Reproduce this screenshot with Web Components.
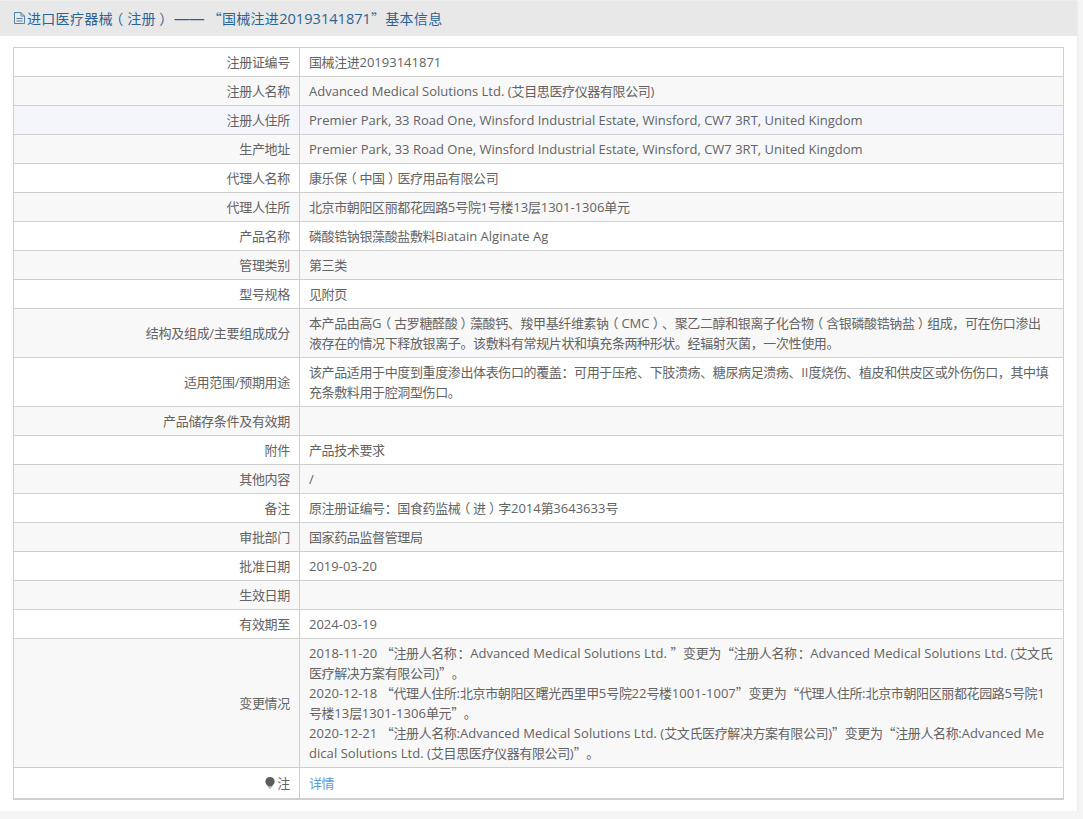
<!DOCTYPE html>
<html lang="zh">
<head>
<meta charset="utf-8">
<title>进口医疗器械（注册）</title>
<style>
  html, body { margin: 0; padding: 0; background: #f5f5f5; }
  body { font-family: "Open Sans", "Noto Sans CJK SC", sans-serif; font-size: 13px; color: #636363; overflow: hidden; text-spacing-trim: space-all; }
  /* runs made by markRuns() */
  .en { letter-spacing: 0; }
  .fw { font-feature-settings: "halt"; padding: 0 .25em; }
  .q { font-family: "Noto Sans CJK SC", sans-serif; }
  .co { font-family: "Noto Sans CJK TC", sans-serif; }
  .title { font-size: 14px; letter-spacing: .3px; }
  .title .en { font-size: 14.6px; }
  .dash { font-size: 16px; letter-spacing: -1px; padding: 0 4px 0 3.6px; }
  detail-row[wide] .en { letter-spacing: .05px; }
  detail-row[wide] .co { padding-left: 1px; }
</style>
</head>
<body>
<detail-panel>
  <span slot="title" class="title">进口医疗器械（注册）<span class="dash">——</span>“国械注进20193141871”基本信息</span>
  <detail-row first label="注册证编号">国械注进20193141871</detail-row>
  <detail-row label="注册人名称" alt>Advanced Medical Solutions Ltd. (艾目思医疗仪器有限公司)</detail-row>
  <detail-row label="注册人住所" hover>Premier Park, 33 Road One, Winsford Industrial Estate, Winsford, CW7 3RT, United Kingdom</detail-row>
  <detail-row label="生产地址" alt>Premier Park, 33 Road One, Winsford Industrial Estate, Winsford, CW7 3RT, United Kingdom</detail-row>
  <detail-row label="代理人名称">康乐保（中国）医疗用品有限公司</detail-row>
  <detail-row label="代理人住所" alt>北京市朝阳区丽都花园路5号院1号楼13层1301-1306单元</detail-row>
  <detail-row label="产品名称">磷酸锆钠银藻酸盐敷料Biatain Alginate Ag</detail-row>
  <detail-row label="管理类别" alt>第三类</detail-row>
  <detail-row label="型号规格">见附页</detail-row>
  <detail-row label="结构及组成/主要组成成分" alt>本产品由高G（古罗糖醛酸）藻酸钙、羧甲基纤维素钠（CMC）、聚乙二醇和银离子化合物（含银磷酸锆钠盐）组成，可在伤口渗出<br>液存在的情况下释放银离子。该敷料有常规片状和填充条两种形状。经辐射灭菌，一次性使用。</detail-row>
  <detail-row label="适用范围/预期用途">该产品适用于中度到重度渗出体表伤口的覆盖：可用于压疮、下肢溃疡、糖尿病足溃疡、II度烧伤、植皮和供皮区或外伤伤口，其中填<br>充条敷料用于腔洞型伤口。</detail-row>
  <detail-row label="产品储存条件及有效期" alt></detail-row>
  <detail-row label="附件">产品技术要求</detail-row>
  <detail-row label="其他内容" alt>/</detail-row>
  <detail-row label="备注">原注册证编号：国食药监械（进）字2014第3643633号</detail-row>
  <detail-row label="审批部门" alt>国家药品监督管理局</detail-row>
  <detail-row label="批准日期">2019-03-20</detail-row>
  <detail-row label="生效日期" alt></detail-row>
  <detail-row label="有效期至">2024-03-19</detail-row>
  <detail-row label="变更情况" alt wide>2018-11-20 “注册人名称：Advanced Medical Solutions Ltd. ”变更为“注册人名称：Advanced Medical Solutions Ltd. (艾文氏<br>医疗解决方案有限公司)”。<br>2020-12-18 “代理人住所:北京市朝阳区曙光西里甲5号院22号楼1001-1007”变更为“代理人住所:北京市朝阳区丽都花园路5号院1<br>号楼13层1301-1306单元”。<br>2020-12-21 “注册人名称:Advanced Medical Solutions Ltd. (艾文氏医疗解决方案有限公司)”变更为“注册人名称:Advanced Me<br>dical Solutions Ltd. (艾目思医疗仪器有限公司)”。</detail-row>
  <detail-row label="注" note last><a-link>详情</a-link></detail-row>
</detail-panel>

<script>
// wrap latin runs, full-width brackets, quotes and colons so each gets its own metrics
function markRuns(el) {
  for (const node of [...el.childNodes]) {
    if (node.nodeType === 1) { if (!node.classList.contains('dash')) markRuns(node); continue; }
    if (node.nodeType !== 3) continue;
    const frag = document.createDocumentFragment();
    for (const part of node.textContent.match(/[A-Za-z0-9 .,\-\/:()]+|[（）]|[“”]|：|[^A-Za-z0-9 .,\-\/:()（）“”：]+/g) || []) {
      let cls = '';
      if (/^[A-Za-z0-9 .,\-\/:()]/.test(part)) cls = 'en';
      else if (/^[（）]/.test(part)) cls = 'fw';
      else if (/^[“”]/.test(part)) cls = 'q';
      else if (part === '：') cls = 'co';
      if (cls) {
        const span = document.createElement('span');
        span.className = cls;
        span.textContent = part;
        frag.appendChild(span);
      } else {
        frag.appendChild(document.createTextNode(part));
      }
    }
    node.replaceWith(frag);
  }
}

class DetailPanel extends HTMLElement {
  connectedCallback() {
    this.attachShadow({ mode: 'open' });
    markRuns(this.querySelector('[slot=title]'));
    this.shadowRoot.innerHTML = `
      <style>
        :host {
          display: block;
          width: 1077px;
          height: 810px;
          margin-top: 1px;
          background: #fff;
          box-shadow: 0 0 3px rgba(0, 0, 0, .08);
        }
        .head {
          box-sizing: border-box;
          height: 35px;
          padding: 0 0 2px 14px;
          display: flex;
          align-items: center;
          background: #e8e8e8;
          color: #2a6496;
        }
        .head svg { width: 11px; height: 12px; margin: 1px 2px 0 0; flex: none; }
        .table {
          margin: 11px 13px 0 13px;
          border: 1px solid #cfcfcf;
          border-bottom-width: 2px;
          width: 1049px;
        }
      </style>
      <div class="head">
        <svg viewBox="0 0 11 12" fill="none" stroke="#5580a8" stroke-width="1">
          <path d="M.5.5h6.5l3.5 3.5v7.5h-10z"/><path d="M7 .5v3.500h3.500M2.500 6.500h6M2.500 9h6"/>
        </svg>
        <slot name="title"></slot>
      </div>
      <div class="table"><slot></slot></div>
    `;
  }
}

class DetailRow extends HTMLElement {
  connectedCallback() {
    this.attachShadow({ mode: 'open' });
    markRuns(this);
    const note = this.hasAttribute('note')
      ? `<svg class="bulb" viewBox="0 0 10 12"><path fill="#5c5c5c" d="M5 0a4.600 4.600 0 0 0-2.600 8.400L3 9.500h4l.6-1.100A4.600 4.600 0 0 0 5 0z"/><path fill="#999" d="M3.400 10.200h3.200L6 11.600H4z"/></svg>`
      : '';
    this.shadowRoot.innerHTML = `
      <style>
        :host {
          display: flex;
          border-top: 1px solid #cfcfcf;
          line-height: 20px;
          background: #fff;
          letter-spacing: -.38px;
        }
        :host([first]) { border-top: 0; }
        :host([alt]) { background: #f8f8f8; }
        :host([hover]) { background: #f5f6fb; }
        .label {
          flex: none;
          width: 276px;
          padding: 4px 9px 4px 0;
          display: flex;
          align-items: center;
          justify-content: flex-end;
          border-right: 1px solid #cfcfcf;
          letter-spacing: -.3px;
        }
        .value { flex: 1; min-height: 20px; padding: 4px 9px; white-space: nowrap; }
        :host([last]) .value, :host([last]) .label { padding-top: 5px; padding-bottom: 5px; }
        .bulb { width: 10px; height: 12px; margin-right: 2px; }
      </style>
      <div class="label">${note}${this.getAttribute('label')}</div>
      <div class="value"><slot></slot></div>
    `;
  }
}

class ALink extends HTMLElement {
  connectedCallback() {
    this.attachShadow({ mode: 'open' });
    this.shadowRoot.innerHTML = `<style>:host { display: inline; color: #5b9bdc; }</style><slot></slot>`;
  }
}

customElements.define('a-link', ALink);
customElements.define('detail-row', DetailRow);
customElements.define('detail-panel', DetailPanel);
</script>
</body>
</html>
